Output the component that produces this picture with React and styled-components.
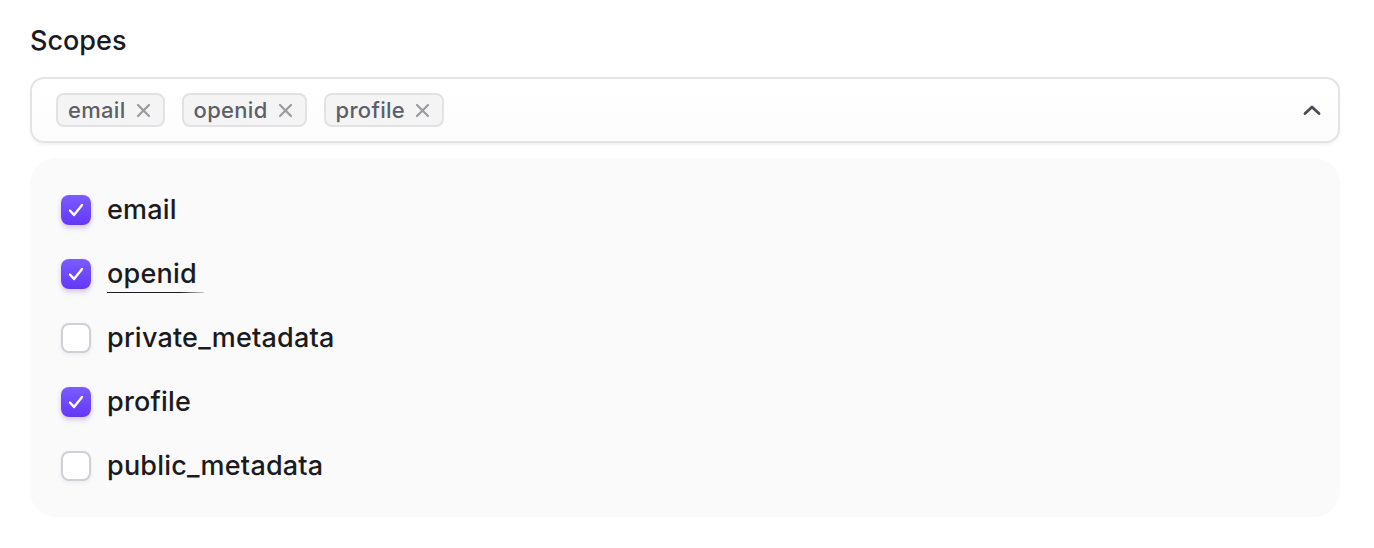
import React, { useState } from 'react'
import styled, { createGlobalStyle } from 'styled-components'

const GlobalStyle = createGlobalStyle`
  body {
    margin: 0;
    background: #ffffff;
    font-family: Inter, "Noto Sans", sans-serif;
    -webkit-font-smoothing: antialiased;
  }
`

const Page = styled.div`
  padding: 24px 34px 0 30px;
  width: 1310px;
`

const Label = styled.div`
  font-size: 27px;
  font-weight: 500;
  line-height: 34px;
  color: #1b1b1f;
  margin-bottom: 19px;
`

const Control = styled.div`
  display: flex;
  align-items: center;
  height: 66px;
  box-sizing: border-box;
  padding: 0 17px 0 24px;
  border: 2px solid #e4e4e7;
  border-radius: 14px;
  background: linear-gradient(#ffffff, #fcfcfc);
  box-shadow: 0 2px 3px rgba(0, 0, 0, 0.05);
`

const Chips = styled.div`
  display: flex;
  gap: 17px;
  flex: 1;
`

const Chip = styled.span`
  display: inline-flex;
  align-items: center;
  gap: 10px;
  height: 34px;
  box-sizing: border-box;
  padding: 0 12px 0 10px;
  border: 2px solid #e2e2e5;
  border-radius: 8px;
  background: #f4f4f5;
  font-size: 22px;
  font-weight: 500;
  letter-spacing: 0.3px;
  color: #5e5e66;
`

const Remove = styled.svg`
  width: 15px;
  height: 15px;
  stroke: #9a9aa1;
  stroke-width: 2.2;
  stroke-linecap: round;
`

const Chevron = styled.svg`
  width: 18px;
  height: 12px;
  stroke: #4a4a52;
  stroke-width: 2.8;
  fill: none;
  stroke-linecap: round;
  stroke-linejoin: round;
`

const Menu = styled.div`
  margin-top: 15px;
  padding: 20px 31px 19px;
  border-radius: 26px;
  background: #fafafa;
`

const Row = styled.label`
  display: flex;
  align-items: center;
  gap: 16px;
  height: 64px;
  cursor: pointer;
`

const Box = styled.span`
  display: flex;
  align-items: center;
  justify-content: center;
  width: 30px;
  height: 30px;
  box-sizing: border-box;
  border-radius: 8px;
  border: ${p => (p.$checked ? 'none' : '2px solid #cfcfd6')};
  background: ${p =>
    p.$checked ? 'linear-gradient(#7a5cff, #6437f5)' : '#ffffff'};
  box-shadow: ${p =>
    p.$checked
      ? '0 3px 5px rgba(100, 60, 240, 0.25)'
      : '0 2px 4px rgba(0, 0, 0, 0.06)'};
`

const Check = styled.svg`
  width: 22px;
  height: 22px;
  stroke: #ffffff;
  stroke-width: 2.4;
  fill: none;
  stroke-linecap: round;
  stroke-linejoin: round;
`

const Text = styled.span`
  position: relative;
  font-size: 27px;
  font-weight: 500;
  letter-spacing: 0.2px;
  color: #1b1b1f;
  line-height: 34px;

  ${p =>
    p.$focused &&
    `
    &::after {
      content: '';
      position: absolute;
      left: 0;
      bottom: -2px;
      width: 97px;
      height: 1.5px;
      background: linear-gradient(to right, #1b1b1f 75%, rgba(27,27,31,0.2));
    }
  `}
`

const options = ['email', 'openid', 'private_metadata', 'profile', 'public_metadata']

export default function App() {
  const [selected, setSelected] = useState(['email', 'openid', 'profile'])

  const toggle = name =>
    setSelected(s => (s.includes(name) ? s.filter(x => x !== name) : [...s, name]))

  return (
    <Page>
      <GlobalStyle />
      <Label>Scopes</Label>
      <Control>
        <Chips>
          {options
            .filter(o => selected.includes(o))
            .map(o => (
              <Chip key={o}>
                {o}
                <Remove viewBox="0 0 15 15" onClick={() => toggle(o)}>
                  <path d="M2 2l11 11M13 2L2 13" />
                </Remove>
              </Chip>
            ))}
        </Chips>
        <Chevron viewBox="0 0 18 12">
          <path d="M2 9.5L9 3l7 6.5" />
        </Chevron>
      </Control>
      <Menu>
        {options.map(o => {
          const checked = selected.includes(o)
          return (
            <Row key={o} onClick={() => toggle(o)}>
              <Box $checked={checked}>
                {checked && (
                  <Check viewBox="0 0 22 22">
                    <path d="M5 11.5l4 4.5L17 6" />
                  </Check>
                )}
              </Box>
              <Text $focused={o === 'openid'}>{o}</Text>
            </Row>
          )
        })}
      </Menu>
    </Page>
  )
}
